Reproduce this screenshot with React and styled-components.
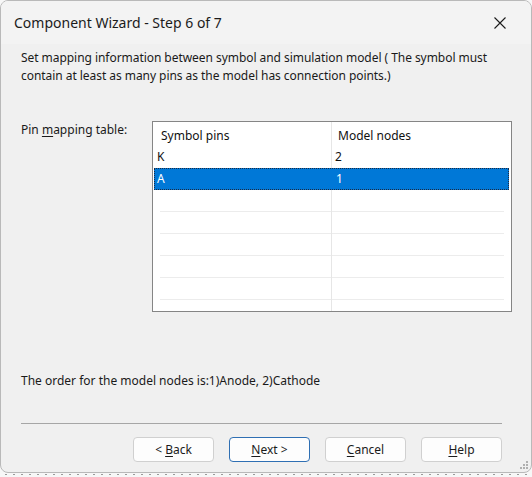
import React from "react";
import styled, { createGlobalStyle } from "styled-components";

const GlobalStyle = createGlobalStyle`
  html, body {
    margin: 0;
    padding: 0;
    background: #f5f5f5;
  }
  body {
    font-family: "Noto Sans", "Open Sans", sans-serif;
    color: #1a1a1a;
  }
`;

const Screen = styled.div`
  width: 532px;
  height: 477px;
  overflow: hidden;
  background-image: radial-gradient(circle, #9a9a9a 0.8px, transparent 1px);
  background-size: 8px 5px;
  background-position: 2px 472px;
  background-repeat: repeat-x;
  background-color: #f7f7f7;
`;

const Window = styled.div`
  box-sizing: border-box;
  width: 532px;
  height: 473px;
  border: 1px solid #b9b9b9;
  border-radius: 8px;
  background: #f0f0f0;
  display: flex;
  flex-direction: column;
  overflow: hidden;
  position: relative;
`;

const TitleBar = styled.div`
  height: 43px;
  flex: none;
  display: flex;
  align-items: center;
  justify-content: space-between;
  padding: 0 22px 0 13px;
  background: #f3f3f3;
  font-size: 14px;
  color: #1b1b1b;
`;

const CloseButton = styled.button`
  width: 24px;
  height: 24px;
  border: none;
  background: transparent;
  padding: 0;
  display: flex;
  align-items: center;
  justify-content: center;
  margin-right: -3px;
`;

const Body = styled.div`
  flex: 1;
  display: flex;
  flex-direction: column;
  padding: 5px 20px 0 20px;
  font-size: 12px;
  line-height: 18px;
`;

const Intro = styled.p`
  margin: 0;
  width: 480px;
  letter-spacing: -0.05px;
`;

const MappingRow = styled.div`
  margin-top: 36px;
  display: grid;
  grid-template-columns: 131px 360px;
`;

const Label = styled.div`
  line-height: 18px;
`;

const Key = styled.span`
  text-decoration: underline;
  text-underline-offset: 2px;
`;

const Table = styled.div`
  box-sizing: border-box;
  height: 191px;
  border: 1px solid #858585;
  background: #ffffff;
  display: flex;
  flex-direction: column;
  overflow: hidden;
  position: relative;
  font-size: 12px;
`;

const Divider = styled.div`
  position: absolute;
  top: 0;
  bottom: 0;
  left: 178px;
  width: 1px;
  background: #e6e6e6;
`;

const Row = styled.div`
  box-sizing: border-box;
  flex: none;
  height: ${(p) => (p.$header ? 24 : 22)}px;
  padding-top: ${(p) => (p.$header ? 4 : 0)}px;
  display: grid;
  grid-template-columns: 179px 1fr;
  align-items: center;
  margin: 0 ${(p) => (p.$selected ? 2 : 0)}px 0 ${(p) => (p.$selected ? 1 : 0)}px;
  background: ${(p) => (p.$selected ? "#0078d7" : "transparent")};
  color: ${(p) => (p.$selected ? "#ffffff" : "#111")};
  outline: ${(p) => (p.$selected ? "1px dotted #1e2a40" : "none")};
  outline-offset: -1px;
  position: relative;
  z-index: 1;
`;

const Cell = styled.div`
  padding-left: ${(p) => p.$pad}px;
  white-space: nowrap;
`;

const EmptyRow = styled.div`
  flex: none;
  height: 22px;
  border-bottom: 1px solid #ececec;
  margin: 0 7px;
  box-sizing: border-box;
`;

const Note = styled.div`
  margin-top: 60px;
`;

const Separator = styled.div`
  margin-top: 33px;
  height: 1px;
  width: 481px;
  background: #a6a6a6;
`;

const ButtonBar = styled.div`
  margin-top: 13px;
  display: flex;
  justify-content: flex-end;
  gap: 15px;
  padding-right: 9px;
`;

const Button = styled.button`
  box-sizing: border-box;
  width: 81px;
  height: 25px;
  border-radius: 4px;
  border: 1px solid ${(p) => (p.$primary ? "#2f6fb3" : "#d0d0d0")};
  background: #fdfdfd;
  font-family: "Noto Sans", "Open Sans", sans-serif;
  font-size: 12px;
  color: #1b1b1b;
  padding: 0;
`;

const Grip = styled.svg`
  position: absolute;
  right: 2px;
  bottom: 2px;
`;

const CloseIcon = () => (
  <svg width="14" height="14" viewBox="0 0 14 14">
    <path d="M1.5 1.5 L12.5 12.5 M12.5 1.5 L1.5 12.5" stroke="#1b1b1b" strokeWidth="1.1" />
  </svg>
);

const rows = [
  { pin: "K", node: "2" },
  { pin: "A", node: "1", selected: true },
];

export default function App() {
  return (
    <Screen>
      <GlobalStyle />
      <Window>
        <TitleBar>
          <span>Component Wizard - Step 6 of 7</span>
          <CloseButton aria-label="Close">
            <CloseIcon />
          </CloseButton>
        </TitleBar>
        <Body>
          <Intro>
            Set mapping information between symbol and simulation model ( The symbol must
            contain at least as many pins as the model has connection points.)
          </Intro>
          <MappingRow>
            <Label>
              Pin <Key>m</Key>apping table:
            </Label>
            <Table>
              <Divider />
              <Row $header>
                <Cell $pad={8}>Symbol pins</Cell>
                <Cell $pad={6}>Model nodes</Cell>
              </Row>
              {rows.map((r) => (
                <Row key={r.pin} $selected={r.selected}>
                  <Cell $pad={r.selected ? 3 : 4}>{r.pin}</Cell>
                  <Cell $pad={3}>{r.node}</Cell>
                </Row>
              ))}
              <EmptyRow />
              <EmptyRow />
              <EmptyRow />
              <EmptyRow />
              <EmptyRow />
            </Table>
          </MappingRow>
          <Note>The order for the model nodes is:1)Anode, 2)Cathode</Note>
          <Separator />
          <ButtonBar>
            <Button>
              &lt; <Key>B</Key>ack
            </Button>
            <Button $primary>
              <Key>N</Key>ext &gt;
            </Button>
            <Button>
              <Key>C</Key>ancel
            </Button>
            <Button>
              <Key>H</Key>elp
            </Button>
          </ButtonBar>
        </Body>
        <Grip width="12" height="12" viewBox="0 0 12 12">
          <rect x="9" y="3" width="2" height="2" fill="#b0b0b0" />
          <rect x="6" y="6" width="2" height="2" fill="#b0b0b0" />
          <rect x="9" y="6" width="2" height="2" fill="#b0b0b0" />
          <rect x="3" y="9" width="2" height="2" fill="#b0b0b0" />
          <rect x="6" y="9" width="2" height="2" fill="#b0b0b0" />
          <rect x="9" y="9" width="2" height="2" fill="#b0b0b0" />
        </Grip>
      </Window>
    </Screen>
  );
}
